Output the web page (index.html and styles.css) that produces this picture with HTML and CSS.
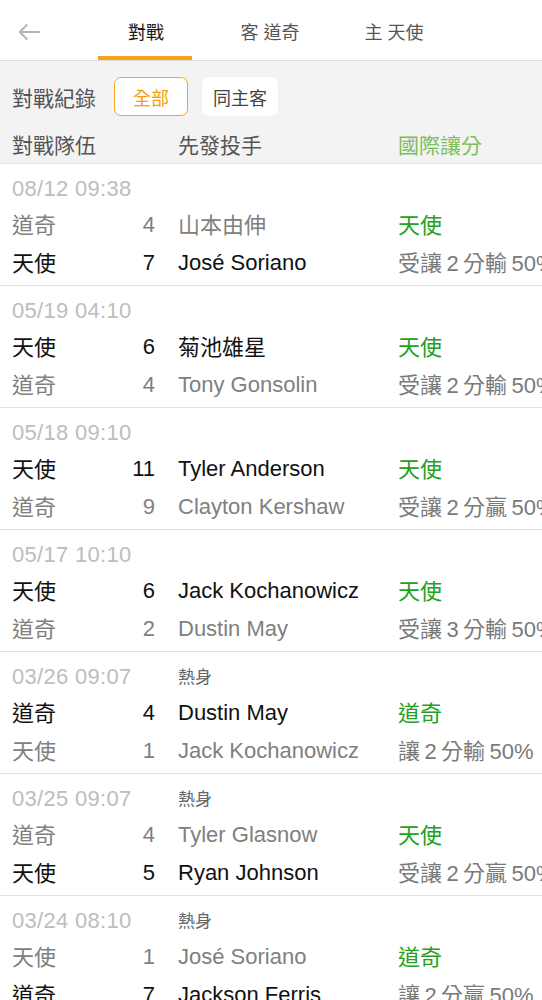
FILE: index.html
```html
<!DOCTYPE html>
<html>
<head>
  <meta charset="utf-8">
  <meta name="viewport" content="width=device-width, initial-scale=1">
  <title>對戰</title>
  <link rel="stylesheet" href="styles.css">
</head>
<body>
  <div class="top">
    <div class="back">
      <svg width="22" height="16" viewBox="0 0 22 16"><path d="M21.5 8H1.8M8.8 1L1.8 8L8.8 15" fill="none" stroke="#b4b4b4" stroke-width="1.8" stroke-linecap="round" stroke-linejoin="round"/></svg>
    </div>
    <div class="tabs">
      <div class="tab active">對戰</div>
      <div class="tab">客 道奇</div>
      <div class="tab">主 天使</div>
    </div>
  </div>

  <div class="filter">
    <span class="label">對戰紀錄</span>
    <button class="chip on">全部</button>
    <button class="chip">同主客</button>
  </div>

  <div class="colhead">
    <div class="c-team">對戰隊伍</div>
    <div class="c-pitch">先發投手</div>
    <div class="c-line">國際讓分</div>
  </div>

  <div class="list">
    <div class="game">
      <div class="when"><span class="date">08/12 09:38</span></div>
      <div class="row lose"><span class="team">道奇</span><span class="score">4</span><span class="pitch">山本由伸</span><span class="res">天使</span></div>
      <div class="row win"><span class="team">天使</span><span class="score">7</span><span class="pitch en">José Soriano</span><span class="hc">受讓&thinsp;2&thinsp;分輸&thinsp;50%</span></div>
    </div>
    <div class="game">
      <div class="when"><span class="date">05/19 04:10</span></div>
      <div class="row win"><span class="team">天使</span><span class="score">6</span><span class="pitch">菊池雄星</span><span class="res">天使</span></div>
      <div class="row lose"><span class="team">道奇</span><span class="score">4</span><span class="pitch en">Tony Gonsolin</span><span class="hc">受讓&thinsp;2&thinsp;分輸&thinsp;50%</span></div>
    </div>
    <div class="game">
      <div class="when"><span class="date">05/18 09:10</span></div>
      <div class="row win"><span class="team">天使</span><span class="score">11</span><span class="pitch en">Tyler Anderson</span><span class="res">天使</span></div>
      <div class="row lose"><span class="team">道奇</span><span class="score">9</span><span class="pitch en">Clayton Kershaw</span><span class="hc">受讓&thinsp;2&thinsp;分贏&thinsp;50%</span></div>
    </div>
    <div class="game">
      <div class="when"><span class="date">05/17 10:10</span></div>
      <div class="row win"><span class="team">天使</span><span class="score">6</span><span class="pitch en">Jack Kochanowicz</span><span class="res">天使</span></div>
      <div class="row lose"><span class="team">道奇</span><span class="score">2</span><span class="pitch en">Dustin May</span><span class="hc">受讓&thinsp;3&thinsp;分輸&thinsp;50%</span></div>
    </div>
    <div class="game">
      <div class="when"><span class="date">03/26 09:07</span><span class="tag">熱身</span></div>
      <div class="row win"><span class="team">道奇</span><span class="score">4</span><span class="pitch en">Dustin May</span><span class="res">道奇</span></div>
      <div class="row lose"><span class="team">天使</span><span class="score">1</span><span class="pitch en">Jack Kochanowicz</span><span class="hc">讓&thinsp;2&thinsp;分輸&thinsp;50%</span></div>
    </div>
    <div class="game">
      <div class="when"><span class="date">03/25 09:07</span><span class="tag">熱身</span></div>
      <div class="row lose"><span class="team">道奇</span><span class="score">4</span><span class="pitch en">Tyler Glasnow</span><span class="res">天使</span></div>
      <div class="row win"><span class="team">天使</span><span class="score">5</span><span class="pitch en">Ryan Johnson</span><span class="hc">受讓&thinsp;2&thinsp;分贏&thinsp;50%</span></div>
    </div>
    <div class="game">
      <div class="when"><span class="date">03/24 08:10</span><span class="tag">熱身</span></div>
      <div class="row lose"><span class="team">天使</span><span class="score">1</span><span class="pitch en">José Soriano</span><span class="res">道奇</span></div>
      <div class="row win"><span class="team">道奇</span><span class="score">7</span><span class="pitch en">Jackson Ferris</span><span class="hc">讓&thinsp;2&thinsp;分贏&thinsp;50%</span></div>
    </div>
  </div>
</body>
</html>
```

FILE: styles.css
```css
* {
  margin: 0;
  padding: 0;
  box-sizing: border-box;
}

body {
  width: 542px;
  overflow: hidden;
  background: #fff;
  font-family: "Liberation Sans", "Noto Sans CJK TC", sans-serif;
  color: #111;
}

/* top bar */
.top {
  display: flex;
  align-items: center;
  height: 61px;
  border-bottom: 1px solid #dcdcdc;
  background: #fff;
}

.back {
  display: flex;
  width: 84px;
  padding: 3px 0 0 18px;
}

.tabs {
  display: flex;
  height: 100%;
}

.tab {
  position: relative;
  display: flex;
  align-items: center;
  justify-content: center;
  width: 124px;
  font-size: 18px;
  color: #555;
  padding-top: 2px;
}

.tab.active {
  color: #1a1a1a;
}

.tab.active::after {
  content: '';
  position: absolute;
  left: 14px;
  right: 16px;
  bottom: 0;
  height: 4px;
  background: #f7a21b;
}

/* filter + column head */
.filter {
  display: flex;
  align-items: center;
  gap: 14px;
  padding: 16px 12px 0;
  background: #f3f3f3;
}

.label {
  font-size: 21px;
  color: #555;
  margin-right: 4px;
}

.chip {
  min-width: 74px;
  height: 39px;
  padding: 0 10px;
  border: 1.5px solid transparent;
  border-radius: 7px;
  background: #fff;
  font-family: inherit;
  font-size: 18px;
  color: #444;
}

.chip.on {
  border-color: #f5a623;
  color: #f5a000;
}

.colhead {
  display: flex;
  padding: 12px 0 0 12px;
  height: 48px;
  line-height: 36px;
  font-size: 21px;
  color: #555;
  background: #f3f3f3;
  border-bottom: 1px solid #e2e2e2;
}

.c-team {
  width: 166px;
}

.c-pitch {
  width: 220px;
}

.c-line {
  color: #7cbf5c;
}

/* games */
.game {
  padding: 6px 0 5px 12px;
  border-bottom: 1px solid #e2e2e2;
}

.when {
  display: flex;
  align-items: center;
  height: 34px;
}

.date {
  width: 166px;
  flex-shrink: 0;
  padding-top: 4px;
  font-size: 22px;
  letter-spacing: 0.3px;
  color: #bdbdbd;
}

.tag {
  font-size: 17px;
  color: #666;
}

.row {
  display: flex;
  align-items: center;
  height: 38px;
  font-size: 22px;
  white-space: nowrap;
}

.row > span {
  flex-shrink: 0;
}

.row.lose {
  color: #808080;
}

.team {
  width: 110px;
}

.score {
  width: 33px;
  padding-top: 4px;
  text-align: right;
}

.pitch {
  width: 220px;
  margin-left: 23px;
}

.pitch.en {
  padding-top: 4px;
}

.res {
  color: #22a022;
}

.hc {
  color: #7a7a7a;
}
```
